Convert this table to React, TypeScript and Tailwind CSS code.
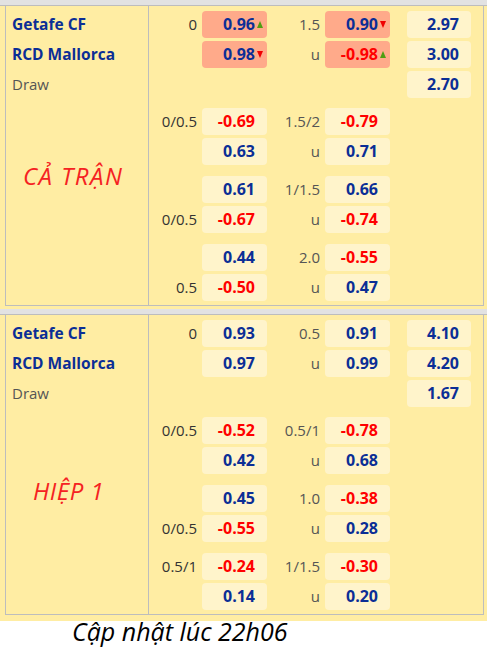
import React from "react"

type Odd = { v: string; hot?: boolean; arrow?: "up" | "down" }
type Line = { l1?: string; o1?: Odd; l2?: string; o2?: Odd; x?: string }

interface Section {
  label: string
  labelClass: string
  teams: string[]
  top: Line[]
  groups: Line[][]
}

const sections: Section[] = [
  {
    label: "CẢ TRẬN",
    labelClass: "mt-[63px] pl-[17px] tracking-[1.5px]",
    teams: ["Getafe CF", "RCD Mallorca", "Draw"],
    top: [
      { l1: "0", o1: { v: "0.96", hot: true, arrow: "up" }, l2: "1.5", o2: { v: "0.90", hot: true, arrow: "down" }, x: "2.97" },
      { o1: { v: "0.98", hot: true, arrow: "down" }, l2: "u", o2: { v: "-0.98", hot: true, arrow: "up" }, x: "3.00" },
      { x: "2.70" },
    ],
    groups: [
      [
        { l1: "0/0.5", o1: { v: "-0.69" }, l2: "1.5/2", o2: { v: "-0.79" } },
        { o1: { v: "0.63" }, l2: "u", o2: { v: "0.71" } },
      ],
      [
        { o1: { v: "0.61" }, l2: "1/1.5", o2: { v: "0.66" } },
        { l1: "0/0.5", o1: { v: "-0.67" }, l2: "u", o2: { v: "-0.74" } },
      ],
      [
        { o1: { v: "0.44" }, l2: "2.0", o2: { v: "-0.55" } },
        { l1: "0.5", o1: { v: "-0.50" }, l2: "u", o2: { v: "0.47" } },
      ],
    ],
  },
  {
    label: "HIỆP 1",
    labelClass: "mt-[69px] pl-[27px] tracking-[0.5px]",
    teams: ["Getafe CF", "RCD Mallorca", "Draw"],
    top: [
      { l1: "0", o1: { v: "0.93" }, l2: "0.5", o2: { v: "0.91" }, x: "4.10" },
      { o1: { v: "0.97" }, l2: "u", o2: { v: "0.99" }, x: "4.20" },
      { x: "1.67" },
    ],
    groups: [
      [
        { l1: "0/0.5", o1: { v: "-0.52" }, l2: "0.5/1", o2: { v: "-0.78" } },
        { o1: { v: "0.42" }, l2: "u", o2: { v: "0.68" } },
      ],
      [
        { o1: { v: "0.45" }, l2: "1.0", o2: { v: "-0.38" } },
        { l1: "0/0.5", o1: { v: "-0.55" }, l2: "u", o2: { v: "0.28" } },
      ],
      [
        { l1: "0.5/1", o1: { v: "-0.24" }, l2: "1/1.5", o2: { v: "-0.30" } },
        { o1: { v: "0.14" }, l2: "u", o2: { v: "0.20" } },
      ],
    ],
  },
]

function Arrow({ dir }: { dir: "up" | "down" }) {
  return (
    <svg className="absolute right-[4px] top-[10px]" width="6" height="7" viewBox="0 0 6 7">
      {dir === "up" ? (
        <polygon points="3,0 6,7 0,7" fill="#4f9e12" />
      ) : (
        <polygon points="0,0 6,0 3,7" fill="#f00000" />
      )}
    </svg>
  )
}

function OddBox({ odd, wide }: { odd?: Odd; wide?: boolean }) {
  const w = wide ? "w-[64px]" : "w-[65px]"
  if (!odd) return <div className={w} />
  const neg = odd.v.startsWith("-")
  return (
    <div
      className={`relative ${w} h-[27px] rounded-[4px] pr-[12px] text-right font-bold text-[16px] leading-[27px] ${
        odd.hot ? "bg-[#ffaa8a]" : "bg-[#fff4cb]"
      } ${neg ? "text-[#ff0000]" : "text-[#0b2e96]"}`}
    >
      {odd.v}
      {odd.arrow && <Arrow dir={odd.arrow} />}
    </div>
  )
}

function OddsRow({ line }: { line: Line }) {
  return (
    <div className="flex h-[30px]">
      <div className="w-[48px] text-right text-[15px] leading-[27px] text-[#333]">{line.l1}</div>
      <div className="ml-[5px]">
        <OddBox odd={line.o1} />
      </div>
      <div className="w-[53px] text-right text-[15px] leading-[27px] text-[#555]">{line.l2}</div>
      <div className="ml-[5px]">
        <OddBox odd={line.o2} />
      </div>
      <div className="ml-[17px]">
        {line.x ? <OddBox odd={{ v: line.x }} wide /> : <div className="w-[64px]" />}
      </div>
    </div>
  )
}

function Band() {
  return <div className="h-[6px] bg-[#e2e2e2] border-b border-[#bdbdbd]" />
}

function Block({ s }: { s: Section }) {
  return (
    <div className="ml-[5px] mr-[3px] flex border-x border-b border-[#bdbdbd]">
      {/* team names + period label */}
      <div className="w-[143px] shrink-0 border-r border-[#bdbdbd] pt-[5px]">
        {s.teams.map((t, i) => (
          <div
            key={t}
            className={`h-[30px] pl-[6px] leading-[27px] ${
              i === 2 ? "text-[15px] text-[#555]" : "text-[15.5px] font-bold text-[#0b2e96]"
            }`}
          >
            {t}
          </div>
        ))}
        <div className={`${s.labelClass} text-[24px] leading-[24px] italic text-[#f52222]`}>{s.label}</div>
      </div>

      {/* odds */}
      <div className="flex-1 pt-[5px] pb-[1px]">
        {s.top.map((l, i) => (
          <OddsRow key={i} line={l} />
        ))}
        {s.groups.map((g, gi) => (
          <div key={gi} className={gi === 0 ? "mt-[7px]" : "mt-[8px]"}>
            {g.map((l, i) => (
              <OddsRow key={i} line={l} />
            ))}
          </div>
        ))}
      </div>
    </div>
  )
}

export default function App() {
  return (
    <div className="w-[487px] h-[649px] bg-white" style={{ fontFamily: '"Open Sans", "Noto Sans", sans-serif' }}>
      <div className="bg-[#ffeda3] pb-[6px]">
        <Band />
        <Block s={sections[0]} />
        <div className="mt-[3px]">
          <Band />
        </div>
        <Block s={sections[1]} />
      </div>
      <div className="pl-[72px] text-[25px] leading-[20px] italic text-black">Cập nhật lúc 22h06</div>
    </div>
  )
}
